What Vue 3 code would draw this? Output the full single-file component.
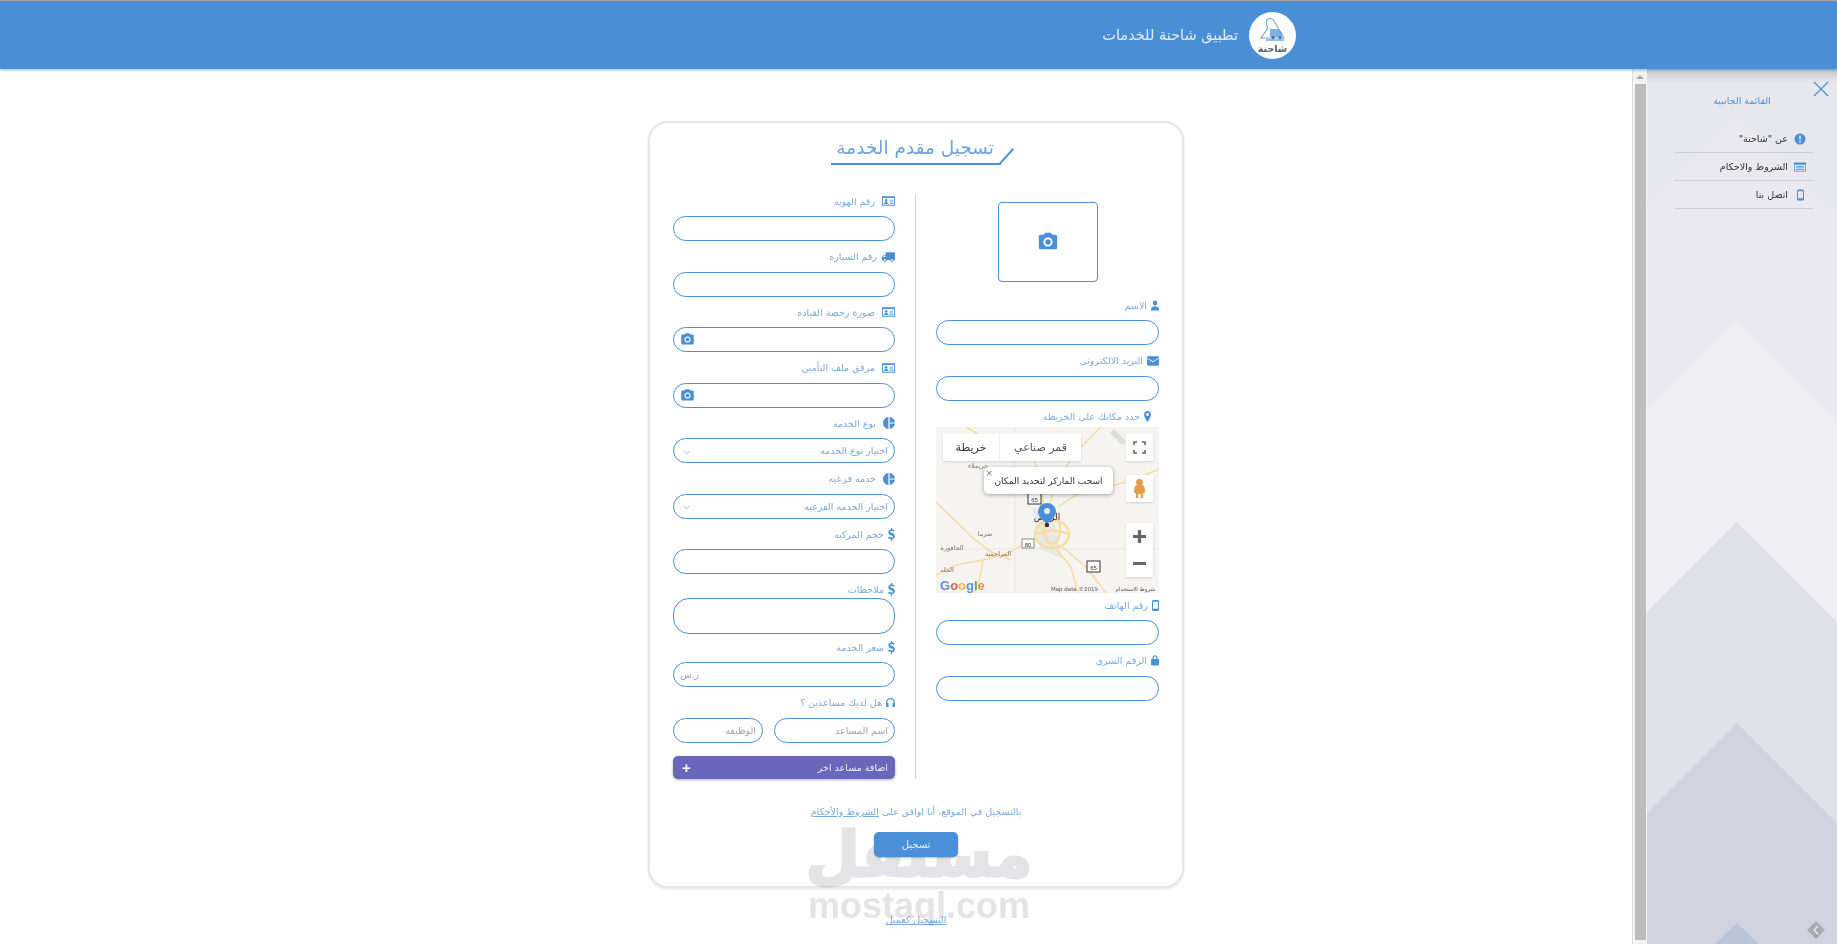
<script setup>
const leftFields = [
  { label: "رقم الهويه", icon: "idcard" },
  { label: "رقم السياره", icon: "truck", flip: true },
  { label: "صورة رخصة القياده", icon: "idcard", file: true },
  { label: "مرفق ملف التأمين", icon: "idcard", file: true },
  { label: "نوع الخدمه", icon: "pie", select: "اختيار نوع الخدمه" },
  { label: "خدمه فرعيه", icon: "pie", select: "اختيار الخدمه الفرعيه" },
  { label: "حجم المركبه", icon: "dollar" },
  { label: "ملاحظات", icon: "dollar", notes: true },
  { label: "سعر الخدمه", icon: "dollar", placeholder: "ر.س" },
];

const menu = [
  { label: 'عن "شاحنة"', icon: "info" },
  { label: "الشروط والاحكام", icon: "table" },
  { label: "اتصل بنا", icon: "mobile" },
];
</script>

<template>
  <div class="page">
    <svg class="sprite" aria-hidden="true">
      <symbol id="camera" viewBox="0 0 24 24">
        <path d="M9 2L7.170 4H4c-1.100 0-2 .9-2 2v12c0 1.100.9 2 2 2h16c1.100 0 2-.9 2-2V6c0-1.100-.9-2-2-2h-3.170L15 2H9zm3 15c-2.760 0-5-2.240-5-5s2.240-5 5-5 5 2.240 5 5-2.240 5-5 5z" />
        <circle cx="12" cy="12" r="3" />
      </symbol>
      <symbol id="user" viewBox="4 1 16 22">
        <path d="M12 12c2.600 0 4.500-2.200 4.500-5S14.600 2 12 2 7.500 4.200 7.500 7s1.900 5 4.500 5zm0 1.500c-3.500 0-8 1.800-8 5V22h16v-3.500c0-3.200-4.500-5-8-5z" />
      </symbol>
      <symbol id="mail" viewBox="2 4 20 16">
        <path d="M20 4H4c-1.100 0-2 .9-2 2v12c0 1.100.9 2 2 2h16c1.100 0 2-.9 2-2V6c0-1.100-.9-2-2-2zm2 4l-10 6L2 8V6.500l10 6 10-6V8z" />
      </symbol>
      <symbol id="place" viewBox="5 1 14 22">
        <path d="M12 1C8.130 1 5 4.130 5 8c0 5.250 7 15 7 15s7-9.750 7-15c0-3.870-3.130-7-7-7zm0 10c-1.660 0-3-1.340-3-3s1.340-3 3-3 3 1.340 3 3-1.340 3-3 3z" />
      </symbol>
      <symbol id="lock" viewBox="4 1 16 22">
        <path d="M18 9h-1V6.500C17 3.700 14.800 1.500 12 1.500S7 3.700 7 6.500V9H6c-1.100 0-2 .9-2 2v9c0 1.100.9 2 2 2h12c1.100 0 2-.9 2-2v-9c0-1.100-.9-2-2-2zM9.500 6.500C9.500 5.100 10.600 4 12 4s2.500 1.100 2.500 2.500V9h-5V6.500z" />
      </symbol>
      <symbol id="mobile" viewBox="5 1 14 22">
        <path d="M16 1H8C6.340 1 5 2.340 5 4v16c0 1.660 1.340 3 3 3h8c1.660 0 3-1.340 3-3V4c0-1.660-1.340-3-3-3zm1 17.500H7V4.500h10v14z" />
      </symbol>
      <symbol id="truck" viewBox="1 4 22 16">
        <path d="M20 8h-3V4H3c-1.100 0-2 .9-2 2v11h2c0 1.660 1.340 3 3 3s3-1.340 3-3h6c0 1.660 1.340 3 3 3s3-1.340 3-3h2v-5l-3-4zM6 18.500c-.83 0-1.500-.67-1.500-1.500s.67-1.500 1.500-1.500 1.500.67 1.500 1.500-.67 1.500-1.500 1.500zm13.500-9l1.960 2.500H17V9.500h2.500zm-1.500 9c-.83 0-1.500-.67-1.500-1.500s.67-1.500 1.500-1.500 1.500.67 1.500 1.500-.67 1.500-1.500 1.500z" />
      </symbol>
      <symbol id="pie" viewBox="2 2 20 20">
        <path d="M11 2v20c-5.070-.5-9-4.790-9-10s3.930-9.500 9-10zm2.030 0v8.990H22c-.47-4.740-4.240-8.520-8.970-8.990zm0 11.010V22c4.740-.47 8.500-4.250 8.970-8.990h-8.970z" />
      </symbol>
      <symbol id="idcard" viewBox="1 1 22 16">
        <path fill-rule="evenodd" d="M1 1h22v16H1V1zm1.500 3v11.500h19V4h-19z" />
        <circle cx="8" cy="8" r="2.200" />
        <path d="M4 14c0-2.200 1.800-3.400 4-3.400s4 1.200 4 3.400H4zM14 7h6v1.200h-6zM14 10h6v1.200h-6zM14 12.800h6V14h-6z" />
      </symbol>
      <symbol id="dollar" viewBox="1 1 12 22">
        <path d="M6 1h2.200v2.300c1.700.2 3 .8 4.100 1.600l-1.500 2.400C9.600 6.500 8.300 6 7 6 5.500 6 4.800 6.600 4.800 7.400c0 2.300 8 1.400 8 7.500 0 2.500-1.700 4.400-4.600 4.900V23H6v-3.100c-2-.2-3.700-1-5-2.100l1.700-2.400c1.300 1 2.800 1.700 4.300 1.700 1.700 0 2.600-.7 2.600-1.700 0-2.600-8-1.500-8-7.400C1.600 5.500 3.200 3.800 6 3.300V1z" />
      </symbol>
      <symbol id="headphones" viewBox="3 3 18 18">
        <path d="M12 3a9 9 0 0 0-9 9v7c0 1.100.9 2 2 2h3v-8H5.500v-1a6.500 6.500 0 0 1 13 0v1H16v8h3c1.100 0 2-.9 2-2v-7a9 9 0 0 0-9-9z" />
      </symbol>
      <symbol id="info" viewBox="0 0 24 24">
        <path fill-rule="evenodd" d="M12 1a11 11 0 1 1 0 22 11 11 0 0 1 0-22zM10.300 5l.5 9h2.400l.5-9h-3.400zM12 15.500a2 2 0 1 0 0 4 2 2 0 0 0 0-4z" />
      </symbol>
      <symbol id="table" viewBox="0 0 24 18">
        <path fill-rule="evenodd" d="M0 0h24v18H0V0zm1.500 4.500v12h21v-12h-21z" />
        <path d="M4 7h16v1.500H4zM4 10h16v1.500H4zM4 13h16v1.500H4z" />
      </symbol>
    </svg>

    <header class="topbar">
      <svg class="logo" viewBox="0 0 47 47">
        <circle cx="23.500" cy="23.500" r="23.500" fill="#fff" />
        <path d="M18 8c2-3 5-2 7 1l10 17H12l7-10c-2-3-2-6-1-8z" fill="none" stroke="#6fa5dc" stroke-width="1.100" />
        <path d="M21 17h8l4 4v4H21z" fill="#4a8fd5" opacity=".7" />
        <path d="M17 28h18" stroke="#4a8fd5" stroke-width="1.200" />
        <circle cx="24" cy="25.500" r="1.500" fill="#3b6ea5" />
        <circle cx="31" cy="25.500" r="1.500" fill="#3b6ea5" />
        <text x="23.500" y="40" text-anchor="middle" class="logo-text">شاحنة</text>
      </svg>
      <span class="brand">تطبيق شاحنة للخدمات</span>
    </header>

    <div class="body-row">
      <main class="content">
        <section class="card">
          <div class="title-wrap">
            <h1 class="title">تسجيل مقدم الخدمة</h1>
          </div>

          <div class="form">
            <div class="col">
              <div class="photo">
                <svg class="ic ic-photo"><use href="#camera" /></svg>
              </div>
              <div class="field">
                <label class="lbl"><svg class="ic ic-user"><use href="#user" /></svg>الاسم</label>
                <input class="inp" />
              </div>
              <div class="field">
                <label class="lbl"><svg class="ic ic-mail"><use href="#mail" /></svg>البريد الالكترونى</label>
                <input class="inp" />
              </div>
              <div class="field map-field">
                <label class="lbl lbl-map"><svg class="ic ic-place"><use href="#place" /></svg>حدد مكانك على الخريطه</label>
                <div class="map">
                  <svg class="map-bg" viewBox="0 0 223 166">
                    <rect width="223" height="166" fill="#f5f4f1" />
                    <path d="M79 0V166M0 122H223" stroke="#e8e8e6" fill="none" />
                    <path d="M96 80l8 42 22 10-8-38z" fill="#e8e8e6" />
                    <g fill="none" stroke="#f8dd9e" stroke-width="1.500">
                      <path d="M0 75L38 112 55 125 75 133" />
                      <path d="M0 148L20 138 47 133 70 127 95 113" />
                      <path d="M47 134L44 150 38 166" />
                      <path d="M112 86L120 55 140 25 165 0" />
                      <path d="M122 80L140 68 172 60 200 52 223 42" />
                      <path d="M124 118L150 140 170 166" />
                      <path d="M120 122L135 140 142 166" />
                      <path d="M30 0L60 18 95 24 104 50 108 84" />
                    </g>
                    <g fill="none" stroke="#f8dd9e" stroke-width="2.400">
                      <ellipse cx="116" cy="107" rx="17" ry="14" />
                      <ellipse cx="116" cy="102" rx="8" ry="15" />
                      <path d="M99 107Q116 100 133 107" />
                    </g>
                    <path d="M178 2L190 14 186 18 174 6z" fill="#ddd" />
                    <g class="map-label">
                      <text x="42" y="41">حريملاء</text>
                      <text x="49" y="109">ضرما</text>
                      <text x="16" y="123">الجافورة</text>
                      <text x="62" y="129">المزاحمية</text>
                      <text x="11" y="145">الجله</text>
                    </g>
                    <g class="shield">
                      <rect x="92" y="66" width="13" height="11" fill="#fff" stroke="#333" />
                      <text x="98.500" y="75">65</text>
                      <rect x="86" y="112" width="12" height="9" fill="#fff" stroke="#888" />
                      <text x="92" y="120">80</text>
                      <rect x="151" y="134" width="13" height="11" fill="#fff" stroke="#333" />
                      <text x="157.500" y="143">65</text>
                    </g>
                    <text x="111" y="93" text-anchor="middle" class="city">الرياض</text>
                    <path d="M111 76c-5.500 0-9 4-9 9 0 5 9 12 9 12s9-7 9-12c0-5-3.500-9-9-9z" fill="#4a90d9" />
                    <circle cx="111" cy="84" r="3" fill="#e8f0fa" />
                    <circle cx="111" cy="98" r="2.200" fill="#333" />
                    <text x="4" y="163" class="google"><tspan fill="#5a93e0">G</tspan><tspan fill="#e5604f">o</tspan><tspan fill="#eebb3f">o</tspan><tspan fill="#5a93e0">g</tspan><tspan fill="#59a95f">l</tspan><tspan fill="#e5904f">e</tspan></text>
                    <text x="115" y="164" class="map-foot">Map data ©2019</text>
                    <text x="219" y="164" text-anchor="end" class="map-foot">شروط الاستخدام</text>
                  </svg>

                  <div class="map-type">
                    <span>خريطة</span>
                    <span>قمر صناعي</span>
                  </div>
                  <div class="map-btn map-full">
                    <svg viewBox="0 0 27 27"><path d="M8 11V8h3M16 8h3v3M19 16v3h-3M11 19H8v-3" fill="none" stroke="#666" stroke-width="1.600" /></svg>
                  </div>
                  <div class="map-btn map-peg">
                    <svg viewBox="0 0 27 27"><path d="M13.500 4a3.500 3.500 0 0 1 3.500 3.500c0 1-.4 1.800-1 2.400 1.800.6 2.800 2 2.800 4v4.100h-1.600V23h-2.300v-4h-2.800v4h-2.300v-5h-1.600v-4.100c0-2 1-3.400 2.800-4-.6-.6-1-1.400-1-2.400A3.500 3.500 0 0 1 13.500 4z" fill="#e39b4c" /></svg>
                  </div>
                  <div class="map-btn map-zoom">
                    <svg viewBox="0 0 27 54"><path d="M7 13.500h13M13.500 7v13M7 40.500h13" fill="none" stroke="#666" stroke-width="3.200" /></svg>
                  </div>
                  <div class="info-win">
                    <span class="info-x">×</span>
                    <span>اسحب الماركر لتحديد المكان</span>
                  </div>
                </div>
              </div>
              <div class="field">
                <label class="lbl"><svg class="ic ic-phone"><use href="#mobile" /></svg>رقم الهاتف</label>
                <input class="inp" />
              </div>
              <div class="field">
                <label class="lbl"><svg class="ic ic-lock"><use href="#lock" /></svg>الرقم السرى</label>
                <input class="inp" />
              </div>
            </div>

            <div class="divider"></div>

            <div class="col">
              <div v-for="f in leftFields" :key="f.label" class="field" :class="{ notes: f.notes }">
                <label class="lbl">
                  <svg class="ic" :class="'ic-' + f.icon"><use :href="'#' + f.icon" /></svg>
                  {{ f.label }}
                </label>
                <div v-if="f.file" class="inp inp-file">
                  <svg class="ic ic-file"><use href="#camera" /></svg>
                </div>
                <div v-else-if="f.select" class="inp inp-select">
                  <span>{{ f.select }}</span>
                  <svg class="chev" viewBox="0 0 10 6"><path d="M1 1l4 4 4-4" fill="none" stroke="#4a90d9" stroke-width=".9" /></svg>
                </div>
                <textarea v-else-if="f.notes" class="inp inp-notes"></textarea>
                <input v-else class="inp inp-left" :placeholder="f.placeholder" />
              </div>

              <div class="field field-helper">
                <label class="lbl"><svg class="ic ic-head"><use href="#headphones" /></svg>هل لديك مساعدين ؟</label>
                <div class="helper-row">
                  <input class="inp inp-name" placeholder="اسم المساعد" />
                  <input class="inp inp-job" placeholder="الوظيفه" />
                </div>
              </div>

              <button class="add-btn">
                <span>اضافة مساعد اخر</span>
                <span class="plus">+</span>
              </button>
            </div>
          </div>

          <p class="agree">بالتسجيل في الموقع، أنا اوافق على <a>الشروط والأحكام</a></p>
          <div class="submit-row">
            <button class="submit">تسجيل</button>
          </div>
        </section>
        <p class="client-link"><a>التسجيل كعميل</a></p>

        <div class="watermark">
          <span class="wm-ar">مستقل</span>
          <span class="wm-en">mostaql.com</span>
        </div>
      </main>

      <div class="scrollbar">
        <span class="scroll-up"></span>
        <span class="scroll-thumb"></span>
      </div>

      <aside class="sidebar">
        <svg class="side-bg" viewBox="0 0 190 875" preserveAspectRatio="none">
          <rect width="190" height="875" fill="#e7e8ee" />
          <path d="M90 46L190 146V875H0V136z" fill="#e9e9ef" />
          <path d="M90 251L190 351V875H0V341z" fill="#eeeef3" />
          <path d="M90 453L190 553V875H0V543z" fill="#dfe0ea" />
          <path d="M90 654L190 754V875H0V744z" fill="#d2d3e1" />
          <path d="M90 854L112 875H68z" fill="#b9c6d8" />
          <path d="M169 852l9 9-9 9-9-9z" fill="#a9abb3" />
          <path d="M171 857l-4 4 4 4" fill="none" stroke="#e7e8ee" stroke-width="1.500" />
        </svg>
        <svg class="close" viewBox="0 0 16 16"><path d="M1 1l14 14M15 1L1 15" stroke="#4a90d9" stroke-width="1.300" fill="none" /></svg>
        <h2 class="side-title">القائمة الجانبية</h2>
        <ul class="menu">
          <li v-for="m in menu" :key="m.label" class="menu-item">
            <svg class="ic menu-ic" :class="'menu-' + m.icon"><use :href="'#' + m.icon" /></svg>
            <span>{{ m.label }}</span>
          </li>
        </ul>
      </aside>
    </div>
  </div>
</template>

<style>
html, body {
  margin: 0;
  height: 100%;
  overflow: hidden;
  background: #fff;
}
</style>

<style scoped>
.page {
  width: 1837px;
  height: 944px;
  display: flex;
  flex-direction: column;
  overflow: hidden;
  font-family: "DejaVu Sans", "Noto Sans", sans-serif;
  color: #7aa9de;
  background: #fff;
}

.sprite {
  position: absolute;
  width: 0;
  height: 0;
}

.topbar {
  height: 68px;
  flex: none;
  display: flex;
  align-items: center;
  gap: 11px;
  padding-right: 541px;
  background: #4a8fd5;
  border-top: 1px solid #a8a8a8;
  box-shadow: 0 1px 3px rgba(0, 0, 0, .3);
  position: relative;
  z-index: 3;
  direction: rtl;
}

.logo {
  width: 47px;
  height: 47px;
  flex: none;
}

.logo-text {
  font-size: 9.500px;
  font-weight: 700;
  fill: #56646f;
}

.brand {
  font-size: 14.500px;
  color: #e4edf7;
}

.body-row {
  flex: 1;
  display: flex;
  min-height: 0;
}

.content {
  position: relative;
  flex: 1;
  padding: 52px 0 0 648px;
  box-sizing: border-box;
  min-width: 0;
}

.card {
  width: 536px;
  height: 767px;
  box-sizing: border-box;
  border: 2px solid #e6e6e6;
  border-radius: 20px;
  box-shadow: 0 1px 3px rgba(0, 0, 0, .12);
  padding: 12px 23px 0;
  direction: rtl;
}

.title-wrap {
  display: flex;
  justify-content: center;
  margin-bottom: 28px;
}

.title {
  position: relative;
  margin: 0;
  height: 26px;
  width: 163px;
  padding: 0 7px 2px 0;
  border-bottom: 2px solid #4a90d9;
  font-size: 18.500px;
  line-height: 26px;
  font-weight: 400;
  color: #6ca2dd;
  white-space: nowrap;
}

.title::after {
  content: "";
  position: absolute;
  right: -20px;
  bottom: -2px;
  width: 21px;
  height: 2px;
  background: #4a90d9;
  transform: rotate(-48deg);
  transform-origin: left bottom;
}

.form {
  display: grid;
  grid-template-columns: 223px 1px 222px;
  column-gap: 20px;
  height: 586px;
}

.col {
  display: flex;
  flex-direction: column;
  min-width: 0;
}

.divider {
  background: #cfd2dc;
  margin-top: 2px;
}

.photo {
  width: 100px;
  height: 80px;
  box-sizing: border-box;
  margin: 9px auto 15px;
  border: 1px solid #4a90d9;
  border-radius: 4px;
  display: flex;
  align-items: center;
  justify-content: center;
}

.ic {
  width: 12px;
  height: 12px;
  flex: none;
  fill: #4a90d9;
}

.ic-photo {
  width: 22px;
  height: 22px;
}

.ic-user {
  width: 8px;
  height: 11px;
}

.ic-mail {
  width: 12px;
  height: 10px;
}

.ic-place {
  width: 7px;
  height: 11px;
}

.ic-phone {
  width: 7px;
  height: 11px;
}

.ic-lock {
  width: 8px;
  height: 11px;
}

.ic-idcard {
  width: 13px;
  height: 10px;
  margin-left: 3px;
}

.ic-truck {
  width: 13px;
  height: 10px;
  margin-left: 1px;
  transform: scaleX(-1);
}

.ic-pie {
  width: 12px;
  height: 12px;
  margin-left: 3px;
}

.ic-dollar {
  width: 7px;
  height: 13px;
}

.ic-head {
  width: 9px;
  height: 9px;
}

.field {
  margin-bottom: 7.500px;
}

.field.notes {
  margin-bottom: 5.500px;
}

.lbl {
  display: flex;
  align-items: center;
  gap: 4px;
  height: 16px;
  margin-bottom: 7px;
  font-size: 9.500px;
  white-space: nowrap;
}

.notes .lbl {
  margin-bottom: 0;
}

.inp {
  display: block;
  width: 100%;
  height: 25px;
  box-sizing: border-box;
  margin: 0;
  padding: 0 6px;
  border: 1px solid #4a90d9;
  border-radius: 13px;
  outline: none;
  background: #fff;
  font-family: inherit;
  font-size: 9.500px;
  color: #7aa9de;
  resize: none;
}

.inp::placeholder {
  color: #a3a3a3;
}

.inp-left {
  text-align: left;
}

.inp-left::placeholder {
  color: #8fa0b3;
}

.inp-file {
  display: flex;
  align-items: center;
  justify-content: flex-end;
}

.ic-file {
  width: 15px;
  height: 15px;
}

.inp-select {
  display: flex;
  align-items: center;
  justify-content: space-between;
}

.chev {
  width: 7px;
  height: 5px;
  margin: 3px 3px 0;
}

.inp-notes {
  height: 36px;
  border-radius: 16px;
}

.helper-row {
  display: flex;
  gap: 11px;
}

.inp-name {
  flex: 1;
  min-width: 0;
}

.inp-job {
  width: 90px;
  flex: none;
}

.add-btn {
  height: 23px;
  margin-top: 6px;
  padding: 0 7px;
  display: flex;
  align-items: center;
  justify-content: space-between;
  border: none;
  border-radius: 5px;
  background: #6a67ba;
  box-shadow: 0 1px 3px rgba(0, 0, 0, .3);
  color: #eef;
  font-family: inherit;
  font-size: 9.500px;
}

.plus {
  font-size: 15px;
  font-weight: 700;
  color: #fff;
  font-family: "Liberation Sans", sans-serif;
  padding-left: 2px;
}

.map-field {
  margin-bottom: 4px;
}

.lbl-map {
  margin-bottom: 3px;
  padding-right: 8px;
}

.map {
  position: relative;
  height: 166px;
  overflow: hidden;
}

.map-bg {
  display: block;
  width: 100%;
  height: 100%;
  direction: ltr;
}

.map-label text {
  font-size: 6.500px;
  fill: #7d7468;
  text-anchor: middle;
}

.shield text {
  font-size: 6px;
  fill: #333;
  text-anchor: middle;
  font-family: "Liberation Sans", sans-serif;
}

.city {
  font-size: 9px;
  fill: #333;
}

.google {
  font-family: "Liberation Sans", sans-serif;
  font-size: 13px;
  font-weight: 700;
}

.map-foot {
  font-size: 5.500px;
  fill: #555;
}

.map-type {
  position: absolute;
  left: 7px;
  top: 7px;
  display: flex;
  direction: ltr;
  height: 27px;
  background: #fff;
  box-shadow: 0 1px 2px rgba(0, 0, 0, .15);
  font-size: 11px;
  color: #555;
}

.map-type span {
  display: flex;
  align-items: center;
  justify-content: center;
  width: 56px;
  color: #333;
}

.map-type span + span {
  width: 81px;
  border-left: 1px solid #eee;
  color: #555;
}

.map-btn {
  position: absolute;
  left: 190px;
  width: 27px;
  background: #fff;
  box-shadow: 0 1px 2px rgba(0, 0, 0, .15);
}

.map-btn svg {
  display: block;
  width: 100%;
  height: 100%;
}

.map-full {
  top: 7px;
  height: 27px;
}

.map-peg {
  top: 48px;
  height: 27px;
}

.map-zoom {
  top: 96px;
  height: 54px;
}

.info-win {
  position: absolute;
  left: 48px;
  top: 40px;
  width: 129px;
  height: 27px;
  display: flex;
  align-items: center;
  justify-content: center;
  background: #fff;
  border-radius: 5px;
  box-shadow: 0 1px 4px rgba(0, 0, 0, .35);
  font-size: 9px;
  color: #333;
  white-space: nowrap;
}

.info-win::after {
  content: "";
  position: absolute;
  left: 53px;
  bottom: -5px;
  width: 10px;
  height: 10px;
  background: #fff;
  transform: rotate(45deg);
  z-index: -1;
}

.info-x {
  position: absolute;
  left: 2px;
  top: 0;
  font-size: 11px;
  line-height: 12px;
  color: #777;
  font-family: "Liberation Sans", sans-serif;
}

.agree {
  margin: 25px 0 0;
  height: 16px;
  line-height: 16px;
  text-align: center;
  font-size: 9.500px;
}

.agree a, .client-link a {
  text-decoration: underline;
}

.submit-row {
  display: flex;
  justify-content: center;
  margin-top: 12px;
}

.submit {
  position: relative;
  z-index: 2;
  width: 84px;
  height: 25px;
  border: none;
  border-radius: 5px;
  background: #4a90d9;
  box-shadow: 0 1px 2px rgba(0, 0, 0, .25);
  color: #e8f0fa;
  font-family: inherit;
  font-size: 10px;
}

.client-link {
  width: 536px;
  margin: 24px 0 0;
  text-align: center;
  direction: rtl;
  font-size: 9.500px;
  line-height: 16px;
}

.watermark {
  position: absolute;
  left: 808px;
  top: 752px;
  width: 222px;
  display: flex;
  flex-direction: column;
  align-items: center;
  color: #e4e4e6;
  mix-blend-mode: multiply;
  pointer-events: none;
  z-index: 1;
}

.wm-ar {
  font-size: 62px;
  line-height: 68px;
  font-weight: 700;
  direction: rtl;
  white-space: nowrap;
  -webkit-text-stroke: 3px #e4e4e6;
}

.wm-en {
  margin-top: 0;
  font-family: "Liberation Sans", sans-serif;
  font-size: 36px;
  line-height: 34px;
  font-weight: 700;
}

.scrollbar {
  width: 15px;
  flex: none;
  position: relative;
  display: flex;
  flex-direction: column;
  align-items: center;
  background: #f3f3f3;
  border-left: 1px solid #dcdcdc;
  box-sizing: border-box;
}

.scroll-up {
  width: 0;
  height: 0;
  margin-top: 6px;
  border: 4px solid transparent;
  border-top: none;
  border-bottom: 4px solid #a8a8a8;
}

.scroll-thumb {
  width: 11px;
  flex: 1;
  margin-top: 5px;
  margin-bottom: 4px;
  background: #bdbdbd;
}

.sidebar {
  position: relative;
  width: 190px;
  flex: none;
  direction: rtl;
  color: #333;
}

.side-bg {
  position: absolute;
  inset: 0;
  width: 100%;
  height: 100%;
}

.sidebar::before {
  content: "";
  position: absolute;
  left: 0;
  right: 0;
  top: 0;
  height: 14px;
  background: linear-gradient(#c6c6ca, rgba(231, 232, 238, 0));
  z-index: 1;
}

.close {
  position: absolute;
  right: 8px;
  top: 12px;
  width: 16px;
  height: 16px;
  z-index: 1;
}

.side-title {
  position: relative;
  margin: 0;
  padding-top: 24px;
  font-size: 9.500px;
  line-height: 16px;
  font-weight: 400;
  text-align: center;
  color: #4a90d9;
}

.menu {
  position: relative;
  list-style: none;
  margin: 16px 24px 0 28px;
  padding: 0;
}

.menu-item {
  height: 28px;
  box-sizing: border-box;
  display: flex;
  align-items: center;
  gap: 6px;
  padding-right: 7px;
  border-bottom: 1px solid #d0d1d8;
  font-size: 9.500px;
  white-space: nowrap;
}

.menu-mobile {
  width: 7px;
  margin: 0 2px 0 3px;
}
</style>
